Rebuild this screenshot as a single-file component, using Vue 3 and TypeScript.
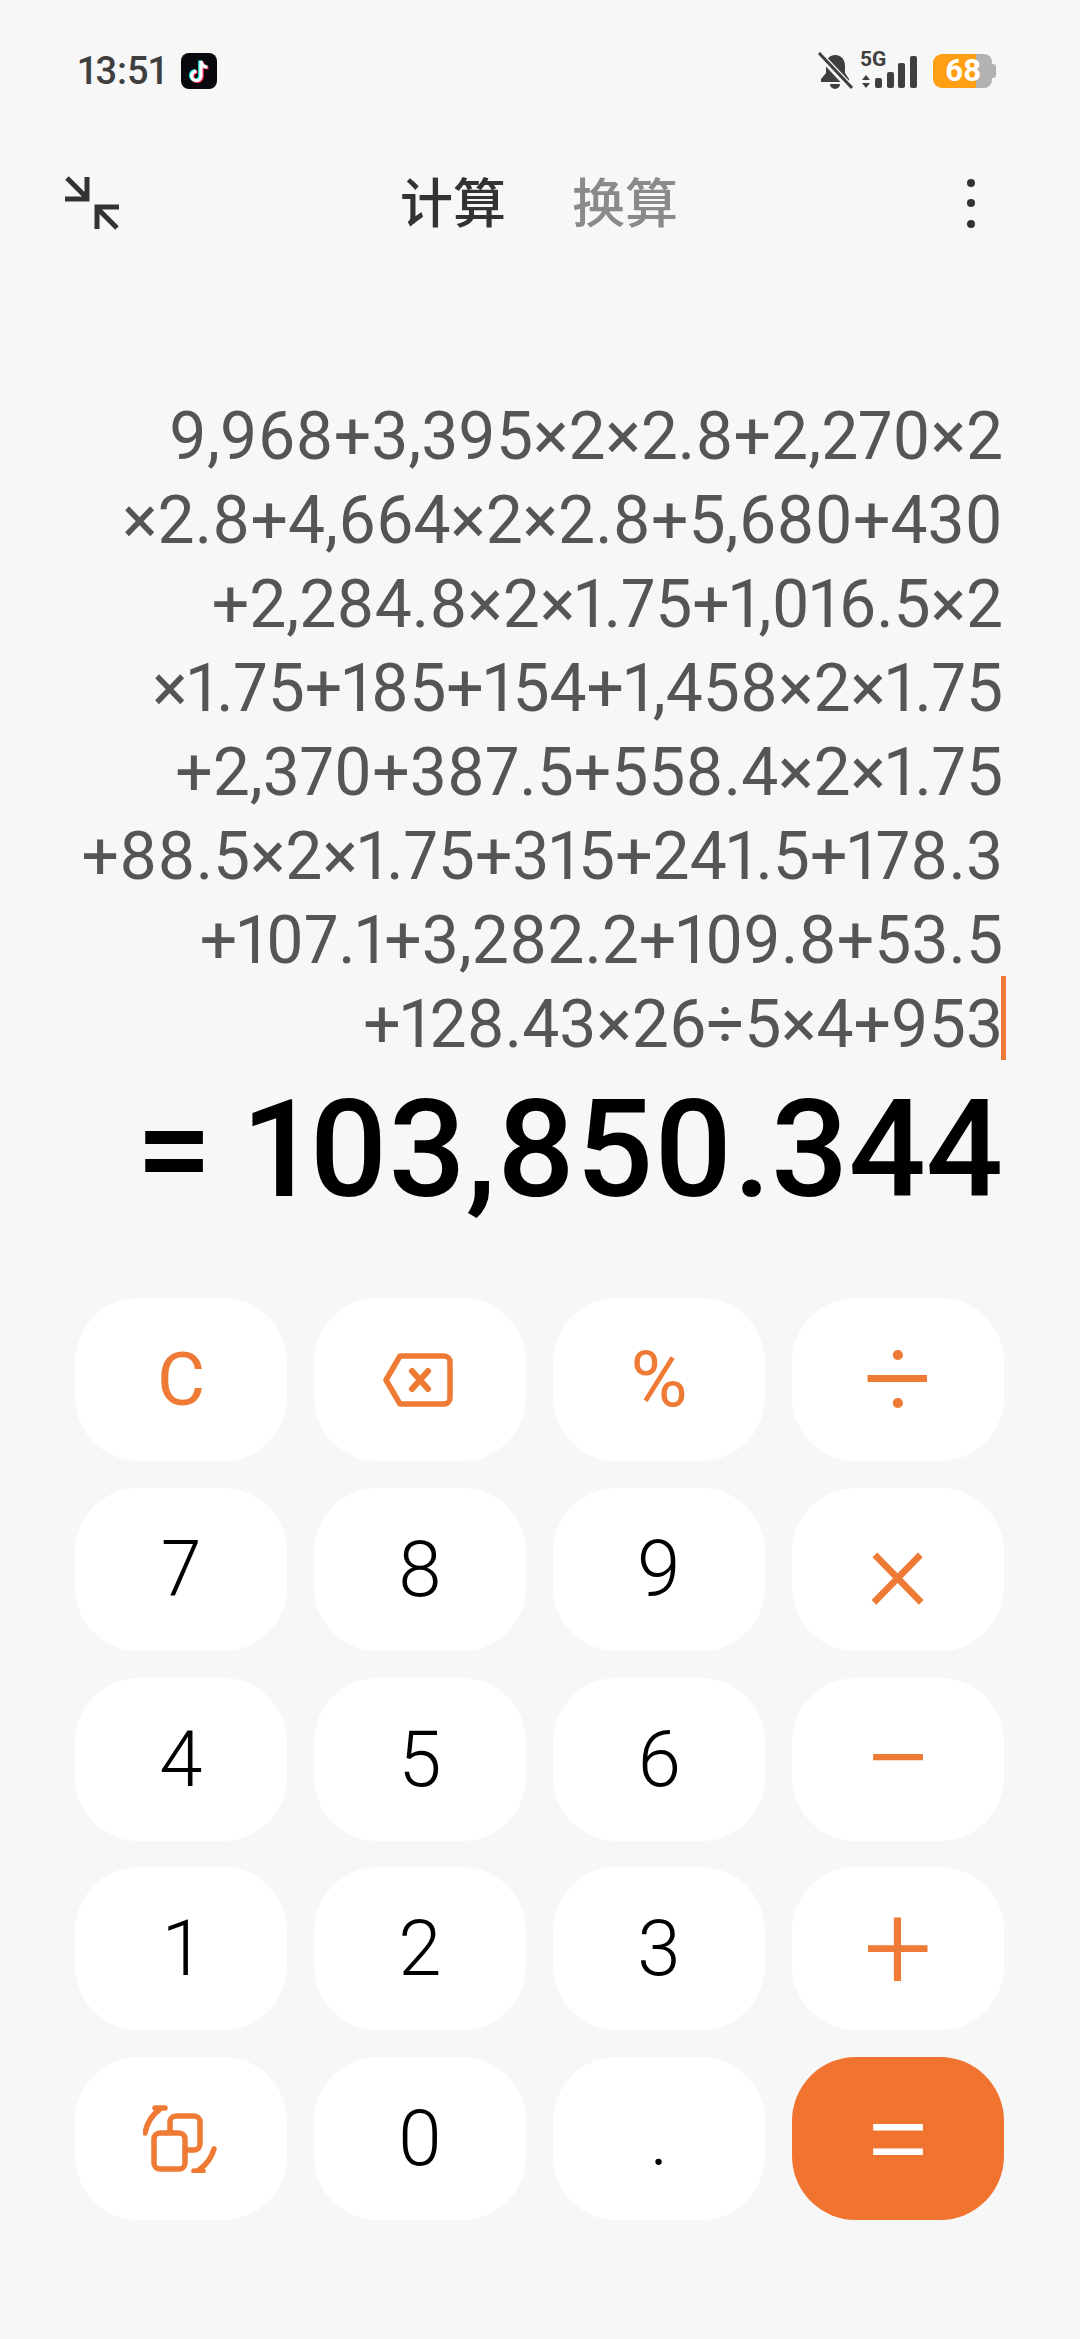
<script setup lang="ts">
const lines = [
  "9,968+3,395×2×2.8+2,270×2",
  "×2.8+4,664×2×2.8+5,680+430",
  "+2,284.8×2×1.75+1,016.5×2",
  "×1.75+185+154+1,458×2×1.75",
  "+2,370+387.5+558.4×2×1.75",
  "+88.5×2×1.75+315+241.5+178.3",
  "+107.1+3,282.2+109.8+53.5",
  "+128.43×26÷5×4+953",
];

const keys = [
  { label: "C", kind: "clear" },
  { label: "", kind: "back" },
  { label: "%", kind: "pct" },
  { label: "÷", kind: "op" },
  { label: "7", kind: "num" },
  { label: "8", kind: "num" },
  { label: "9", kind: "num" },
  { label: "×", kind: "op" },
  { label: "4", kind: "num" },
  { label: "5", kind: "num" },
  { label: "6", kind: "num" },
  { label: "−", kind: "op" },
  { label: "1", kind: "num" },
  { label: "2", kind: "num" },
  { label: "3", kind: "num" },
  { label: "+", kind: "op" },
  { label: "", kind: "swap" },
  { label: "0", kind: "num" },
  { label: ".", kind: "num" },
  { label: "=", kind: "equals" },
];
</script>

<template>
  <main class="page">
    <div class="status">
      <div class="status-left">
        <span class="time">13:51</span>
        <svg class="tiktok" width="36" height="36" viewBox="0 0 36 36">
          <rect width="36" height="36" rx="8" fill="#08080f" />
          <path d="M20 8v15a4.6 4.6 0 1 1-4.6-4.6M20 8c.4 3.6 2.8 6 6.4 6.2" fill="none" stroke="#25f4ee" stroke-width="3.6" transform="translate(-1 -.6)" />
          <path d="M20 8v15a4.6 4.6 0 1 1-4.6-4.6M20 8c.4 3.6 2.8 6 6.4 6.2" fill="none" stroke="#fe2c55" stroke-width="3.6" transform="translate(1 .6)" />
          <path d="M20 8v15a4.6 4.6 0 1 1-4.6-4.6M20 8c.4 3.6 2.8 6 6.4 6.2" fill="none" stroke="#fff" stroke-width="3.2" />
        </svg>
      </div>
      <div class="status-right">
        <svg width="36" height="38" viewBox="0 0 36 38">
          <path d="M18 3c7 0 10 5 10 11v7l4 6v3H4v-3l5-6v-9c0-5 4-9 9-9z" fill="#3f3f3f" />
          <path d="M13 32h10a5 5 0 0 1-10 0z" fill="#3f3f3f" />
          <path d="M2 2l32 34" stroke="#f7f7f7" stroke-width="7" />
          <path d="M2 1l33 35" stroke="#3f3f3f" stroke-width="3" />
        </svg>
        <div class="network">
          <span class="five-g">5G</span>
          <svg width="58" height="36" viewBox="0 0 58 36">
            <path d="M2 24l4-5 4 5zM2 27l4 5 4-5z" fill="#3f3f3f" />
            <rect x="15" y="22" width="7" height="10" rx="2" fill="#3f3f3f" />
            <rect x="27" y="16" width="7" height="16" rx="2" fill="#3f3f3f" />
            <rect x="38" y="7" width="7" height="25" rx="2" fill="#3f3f3f" />
            <rect x="50" y="0" width="7" height="32" rx="2" fill="#3f3f3f" />
          </svg>
        </div>
        <div class="battery">
          <div class="battery-fill"></div>
          <div class="battery-rest"></div>
          <div class="battery-nub"></div>
          <span class="battery-text">68</span>
        </div>
      </div>
    </div>

    <header class="topbar">
      <svg class="shrink" width="54" height="54" viewBox="0 0 54 54" fill="none" stroke="#333" stroke-width="5">
        <path d="M2 2l20 20M22 1v22H0" />
        <path d="M52 52L32 32M32 53V31h23" />
      </svg>
      <nav class="tabs">
        <span class="tab active">计算</span>
        <span class="tab">换算</span>
      </nav>
      <div class="more">
        <i></i><i></i><i></i>
      </div>
    </header>

    <section class="expression">
      <div v-for="(line, i) in lines" :key="i" class="line">
        <span class="line-text">{{ line }}<span v-if="i == lines.length - 1" class="caret"></span></span>
      </div>
    </section>
    <div class="result">= 103,850.344</div>

    <section class="keypad">
      <div v-for="(key, i) in keys" :key="i" class="key" :class="key.kind">
        <svg v-if="key.kind == 'back'" width="70" height="56" viewBox="0 0 70 56" fill="none" stroke="#ee7a35" stroke-width="5.5" stroke-linejoin="round" stroke-linecap="round">
          <path d="M3 28L17 4h44a6 6 0 0 1 6 6v36a6 6 0 0 1-6 6H17z" />
          <path d="M29 19l16 18M45 19L29 37" stroke-width="6" />
        </svg>
        <svg v-else-if="key.kind == 'swap'" width="76" height="68" viewBox="0 0 76 68" fill="none" stroke="#ee7a35" stroke-width="5.5" stroke-linecap="round">
          <rect x="27" y="11" width="30" height="34" rx="6" />
          <rect x="11" y="28" width="31" height="36" rx="6" fill="#fff" />
          <path d="M2 28C4 18 9 10 16 5M12 3l10 0" />
          <path d="M71 44C68 54 63 60 57 64M51 66l9 0" />
        </svg>
        <template v-else>{{ key.label }}</template>
      </div>
    </section>
  </main>
</template>

<style scoped>
.page {
  width: 1080px;
  height: 2339px;
  box-sizing: border-box;
  padding: 52px 77px 0 75px;
  background-color: #f7f7f7;
  font-family: Roboto, "Noto Sans CJK SC", sans-serif;
  font-variant-numeric: proportional-nums;
  overflow: hidden;
}

.status {
  height: 38px;
  display: flex;
  justify-content: space-between;
  align-items: center;
}
.status-left {
  display: flex;
  align-items: center;
  gap: 15px;
  margin-left: 3px;
}
.time {
  font-size: 38px;
  font-weight: 500;
  color: #3f3f3f;
}
.status-right {
  display: flex;
  align-items: center;
  gap: 7px;
  margin-right: 6px;
}
.network {
  position: relative;
  width: 58px;
  height: 38px;
  margin-top: 2px;
}
.five-g {
  position: absolute;
  left: 0;
  top: -4px;
  font-size: 21px;
  font-weight: 700;
  line-height: 20px;
  color: #3f3f3f;
}
.network svg {
  position: absolute;
  left: 0;
  top: 3px;
}
.battery {
  position: relative;
  display: flex;
  align-items: center;
  width: 64px;
  height: 34px;
  margin-left: 8px;
}
.battery-fill {
  width: 43px;
  height: 100%;
  background-color: #ff9f14;
  border-radius: 9px 0 0 9px;
}
.battery-rest {
  width: 16px;
  height: 100%;
  background-color: #b2b2b2;
  border-radius: 0 8px 8px 0;
}
.battery-nub {
  width: 4px;
  height: 14px;
  background-color: #b2b2b2;
  border-radius: 0 3px 3px 0;
}
.battery-text {
  position: absolute;
  left: 12px;
  top: 0;
  font-size: 31px;
  font-weight: 700;
  line-height: 34px;
  color: #fff;
}

.topbar {
  height: 76px;
  margin-top: 75px;
  display: grid;
  grid-template-columns: 1fr auto 1fr;
  align-items: center;
}
.shrink {
  margin-left: -10px;
}
.tabs {
  display: flex;
  gap: 66px;
  margin-top: -6px;
}
.tab {
  font-size: 53px;
  font-weight: 500;
  color: #8a8a8a;
  font-family: "Noto Sans CJK SC", sans-serif;
}
.tab.active {
  color: #333;
}
.more {
  justify-self: end;
  display: flex;
  flex-direction: column;
  gap: 12.5px;
  margin-right: 28px;
}
.more i {
  display: block;
  width: 8px;
  height: 8px;
  border-radius: 50%;
  background-color: #333;
}

.expression {
  margin-top: 154px;
  text-align: right;
  font-size: 66px;
  color: #555;
}
.line {
  height: 84px;
  line-height: 84px;
  white-space: nowrap;
}
.line-text {
  position: relative;
}
.caret {
  position: absolute;
  right: -3px;
  top: -10px;
  width: 5px;
  height: 84px;
  background-color: #ee7a35;
}

.result {
  height: 160px;
  margin-top: 3px;
  font-size: 136px;
  font-weight: 500;
  line-height: 160px;
  text-align: right;
  color: #000;
  white-space: nowrap;
}

.keypad {
  margin-top: 68px;
  display: grid;
  grid-template-columns: repeat(4, 212px);
  grid-auto-rows: 163px;
  column-gap: 27px;
  row-gap: 26.75px;
}
.key {
  display: flex;
  align-items: center;
  justify-content: center;
  background-color: #fff;
  border-radius: 64px;
  font-size: 78px;
  font-weight: 300;
  color: #000;
}
.clear,
.pct,
.op {
  color: #ee7a35;
}
.clear {
  font-size: 74px;
  font-weight: 400;
}
.pct {
  font-size: 78px;
  font-weight: 400;
}
.op {
  font-size: 122px;
}
.back svg {
  margin-left: -5px;
}
.equals {
  background-color: #f07330;
  color: #fff;
  font-size: 122px;
}
</style>

<style>
html,
body {
  background-color: #f7f7f7;
}
</style>
